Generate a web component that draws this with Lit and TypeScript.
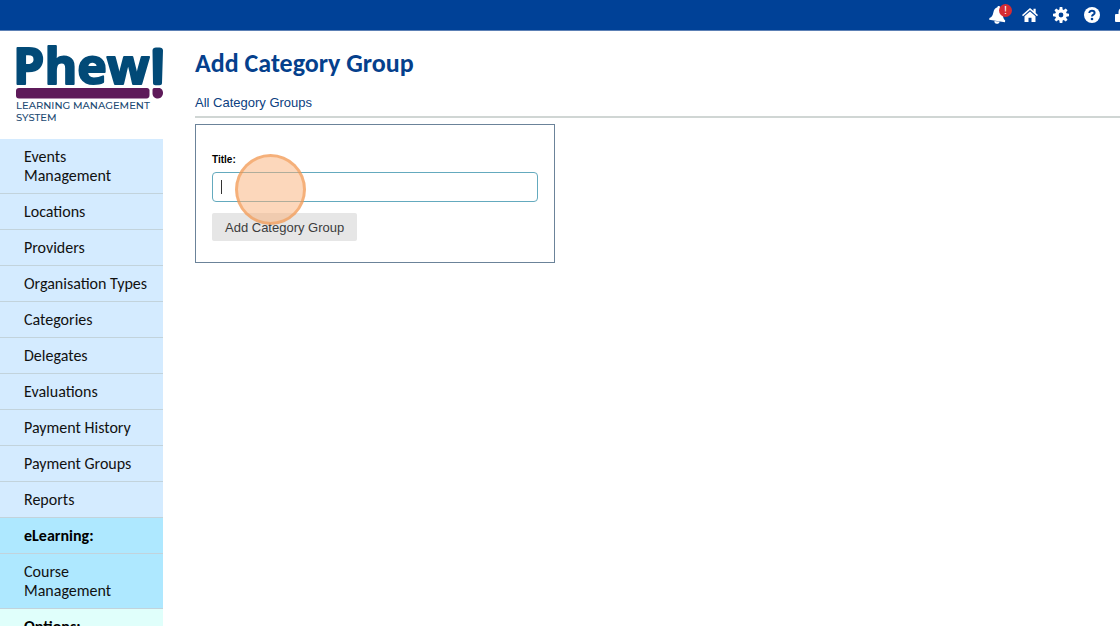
import { LitElement, html, css, svg } from "lit";
import { customElement, query } from "lit/decorators.js";
import { classMap } from "lit/directives/class-map.js";

interface NavItem {
  label: string;
  tone: "main" | "learning" | "options";
  heading?: boolean;
}

const NAV: NavItem[] = [
  { label: "Events Management", tone: "main" },
  { label: "Locations", tone: "main" },
  { label: "Providers", tone: "main" },
  { label: "Organisation Types", tone: "main" },
  { label: "Categories", tone: "main" },
  { label: "Delegates", tone: "main" },
  { label: "Evaluations", tone: "main" },
  { label: "Payment History", tone: "main" },
  { label: "Payment Groups", tone: "main" },
  { label: "Reports", tone: "main" },
  { label: "eLearning:", tone: "learning", heading: true },
  { label: "Course Management", tone: "learning" },
  { label: "Options:", tone: "options", heading: true },
];

const GEAR_TEETH = [0, 45, 90, 135, 180, 225, 270, 315];

@customElement("top-bar")
class TopBar extends LitElement {
  static styles = css`
    :host {
      display: block;
      background: #004197;
      border-bottom: 1px solid #5c80b5;
      overflow: hidden;
    }
    .bar {
      display: flex;
      justify-content: flex-end;
      align-items: center;
      gap: 15px;
      height: 30px;
      margin-right: -11px;
    }
    .icon {
      position: relative;
      display: block;
      width: 16px;
      height: 16px;
      color: #fff;
    }
    .bell {
      width: 18px;
      height: 18px;
    }
    svg {
      display: block;
      width: 100%;
      height: 100%;
      fill: currentColor;
      overflow: visible;
    }
    .badge {
      position: absolute;
      top: -2px;
      right: -5px;
      width: 13px;
      height: 13px;
      border-radius: 50%;
      background: #d62b33;
      font: 11px/13px "Liberation Sans", Arial, sans-serif;
      text-align: center;
    }
  `;

  render() {
    return html`
      <div class="bar">
        <a class="icon bell" href="#" aria-label="Notifications">
          <svg viewBox="0 0 18 18">
            <path
              transform="rotate(9 9 9)"
              d="M8.500 0c1 0 1.500.6 1.500 1.500 2.700.9 4 3 4 5.700 0 3.100.9 4.600 3 6.100V15H1v-1.700c2.400-1.500 2.800-3 3-6.100.2-2.700 1-4.800 3.200-5.700C7.200.6 7.600 0 8.500 0zM6.400 15.400h5.200c0 1.600-1.200 2.400-2.600 2.400s-2.600-.8-2.600-2.400z"
            />
          </svg>
          <span class="badge">!</span>
        </a>
        <a class="icon" href="#" aria-label="Home">
          <svg viewBox="0 0 16 16">
            <path
              d="M8 1 0 8l1 1.200L8 3.100l7 6.100L16 8l-2.300-2V1.800h-2.200v2.300z"
            />
            <path d="M8 4.400 2.500 9.200V15h4v-4.200h3V15h4V9.200z" />
          </svg>
        </a>
        <a class="icon" href="#" aria-label="Settings">
          <svg viewBox="0 0 16 16">
            ${GEAR_TEETH.map(
              (angle) => svg`<path d="M6.300 3 6.700 0h2.600l.4 3z" transform="rotate(${angle} 8 8)" />`
            )}
            <circle
              cx="8"
              cy="8"
              r="4.100"
              fill="none"
              stroke="currentColor"
              stroke-width="3.400"
            />
          </svg>
        </a>
        <a class="icon" href="#" aria-label="Help">
          <svg viewBox="0 0 16 16">
            <circle cx="8" cy="8" r="8" />
            <path
              d="M5.300 6.100C5.300 2.700 10.600 3 10.600 5.900 10.600 7.700 8 7.600 8 9.600"
              fill="none"
              stroke="#004197"
              stroke-width="2"
            />
            <circle cx="8" cy="12" r="1.300" fill="#004197" />
          </svg>
        </a>
        <a class="icon" href="#" aria-label="Log out">
          <svg viewBox="0 0 16 16">
            <path
              d="M4.500 8V5a3.500 3.500 0 0 1 7 0v3"
              fill="none"
              stroke="currentColor"
              stroke-width="2"
            />
            <rect x="0" y="7" width="16" height="8" rx="1" />
          </svg>
        </a>
      </div>
    `;
  }
}

@customElement("brand-logo")
class BrandLogo extends LitElement {
  static styles = css`
    :host {
      display: block;
    }
    svg {
      display: block;
      width: 148px;
      height: 78px;
      overflow: visible;
    }
    .name {
      font: 700 50px "Open Sans", sans-serif;
      fill: #024a77;
      stroke: #024a77;
      stroke-width: 2px;
      stroke-linejoin: round;
    }
    .tag {
      font: 500 10px Montserrat, Lato, sans-serif;
      fill: #1b4a72;
    }
    .ink {
      fill: #024a77;
    }
    .plum {
      fill: #5e1a5a;
    }
  `;

  render() {
    return html`
      <svg viewBox="0 0 148 78" role="img" aria-label="Phew! Learning Management System">
        <text class="name" x="-3" y="37">Phew</text>
        <path
          class="ink"
          d="M136.500 3.500c0-2 1.500-3 3.500-3h3.500c2 0 3.500 1 3.500 3L146 36c0 1.500-1 2.200-2.500 2.200h-4c-1.500 0-2.500-.7-2.500-2.200z"
        />
        <path
          class="plum"
          d="M3 41h128c1.500 0 2.500 1 2.500 2.500v4.500c0 2-1 3.500-3 3.500H3c-2 0-3-1-3-3V44c0-2 1-3 3-3z"
        />
        <path
          class="plum"
          d="M138 41h5c2.500 0 4 2.500 4 5s-2 5.500-5 5.500-5.500-2-5.500-5V43c0-1 .5-2 1.500-2z"
        />
        <text class="tag" x="0" y="62">LEARNING MANAGEMENT</text>
        <text class="tag" x="0" y="74">SYSTEM</text>
      </svg>
    `;
  }
}

@customElement("side-nav")
class SideNav extends LitElement {
  static styles = css`
    :host {
      display: block;
      font: 16px/19px Carlito, Calibri, Lato, sans-serif;
    }
    ul {
      list-style: none;
      margin: 0;
      padding: 0;
    }
    li {
      border-bottom: 1px solid #c2d3dc;
      padding: 8px 12px 8px 24px;
      color: #111;
    }
    .main {
      background: #d4ebff;
    }
    .learning {
      background: #aee8ff;
    }
    .options {
      background: #e0fffb;
    }
    .heading {
      font-weight: 700;
      color: #000;
    }
    a {
      color: inherit;
      text-decoration: none;
    }
  `;

  render() {
    return html`
      <nav aria-label="Main">
        <ul>
          ${NAV.map(
            (item) => html`<li
              class=${classMap({ [item.tone]: true, heading: !!item.heading })}
            >
              ${item.heading ? item.label : html`<a href="#">${item.label}</a>`}
            </li>`
          )}
        </ul>
      </nav>
    `;
  }
}

@customElement("app-root")
class AppRoot extends LitElement {
  static styles = css`
    :host {
      display: flex;
      flex-direction: column;
      height: 100vh;
      overflow: hidden;
      background: #fff;
      font-family: "Liberation Sans", Arial, sans-serif;
    }
    .body {
      display: grid;
      grid-template-columns: 163px 1fr;
      gap: 32px;
      flex: 1;
      min-height: 0;
    }
    .logo {
      padding: 16px 0 14px 16px;
    }
    h1 {
      margin: 0;
      padding: 16px 0;
      font: 700 26px/32px Carlito, Calibri, Lato, sans-serif;
      color: #05408c;
    }
    .crumbs {
      border-bottom: 2px solid #d0d6d4;
      padding-bottom: 6px;
      font-size: 13px;
      line-height: 15px;
    }
    .crumbs a {
      color: #0b4080;
      text-decoration: none;
    }
    form {
      box-sizing: border-box;
      max-width: 360px;
      margin-top: 6px;
      padding: 28px 16px 21px;
      border: 1px solid #6b8399;
      display: flex;
      flex-direction: column;
      align-items: flex-start;
    }
    label {
      font-size: 10px;
      line-height: 14px;
      font-weight: 700;
      color: #000;
      margin-bottom: 5px;
    }
    .field {
      position: relative;
      width: 100%;
      margin-bottom: 11px;
    }
    input {
      display: block;
      box-sizing: border-box;
      width: 100%;
      height: 30px;
      padding: 0 8px;
      border: 1px solid #64aabe;
      border-radius: 4px;
      outline: none;
      background: #fff;
      font: 13px "Liberation Sans", Arial, sans-serif;
      caret-color: transparent;
    }
    .caret {
      position: absolute;
      left: 9px;
      top: 8px;
      width: 1px;
      height: 14px;
      background: #333;
    }
    .pointer {
      position: absolute;
      left: 23px;
      top: -18px;
      box-sizing: border-box;
      width: 71px;
      height: 71px;
      border: 3px solid rgba(240, 145, 70, 0.55);
      border-radius: 50%;
      background: rgba(250, 175, 120, 0.5);
      pointer-events: none;
    }
    button {
      height: 28px;
      padding: 0 13px;
      border: 0;
      border-radius: 2px;
      background: #e6e6e6;
      color: #3c3c3c;
      font: 13px "Liberation Sans", Arial, sans-serif;
    }
  `;

  @query("input") private titleInput!: HTMLInputElement;

  firstUpdated() {
    this.titleInput.focus();
  }

  render() {
    return html`
      <top-bar></top-bar>
      <div class="body">
        <aside>
          <div class="logo"><brand-logo></brand-logo></div>
          <side-nav></side-nav>
        </aside>
        <main>
          <h1>Add Category Group</h1>
          <div class="crumbs"><a href="#">All Category Groups</a></div>
          <form @submit=${(event: Event) => event.preventDefault()}>
            <label for="title">Title:</label>
            <div class="field">
              <input id="title" type="text" autocomplete="off" />
              <span class="caret"></span>
              <span class="pointer"></span>
            </div>
            <button type="submit">Add Category Group</button>
          </form>
        </main>
      </div>
    `;
  }
}
